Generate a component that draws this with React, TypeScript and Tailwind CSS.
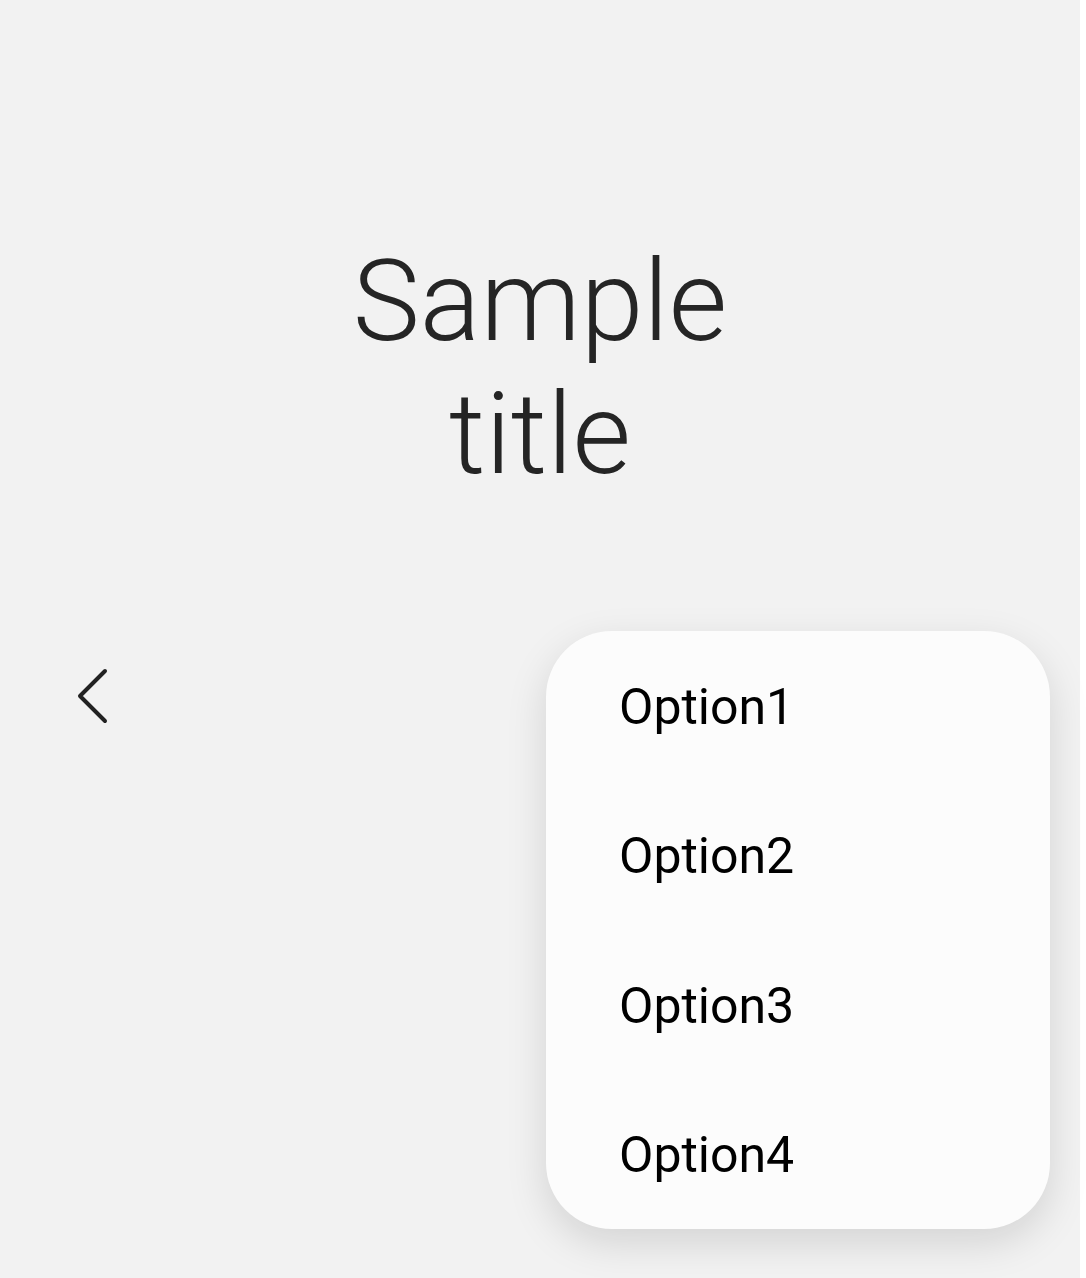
import React from 'react';

const options = ['Option1', 'Option2', 'Option3', 'Option4'];

function BackIcon() {
  return (
    <svg width="46" height="70" viewBox="0 0 46 70" fill="none">
      <path d="M35 10 L10 35 L35 60" stroke="#222222" strokeWidth="4" strokeLinecap="round" strokeLinejoin="round" />
    </svg>
  );
}

function PopupMenu() {
  return (
    <div className="absolute left-[546px] top-[631px] w-[504px] h-[598px] bg-[#fcfcfc] rounded-[66px] shadow-[0_14px_40px_rgba(0,0,0,0.13)] flex flex-col">
      {options.map(o => (
        <div key={o} className="h-[149.5px] flex items-center pl-[73px] pt-[2px] text-[50px] text-black leading-none">
          {o}
        </div>
      ))}
    </div>
  );
}

export default function App() {
  return (
    <div className="flex w-full h-[1278px] overflow-hidden" style={{ fontFamily: 'Roboto, "Noto Sans", sans-serif' }}>
      <div className="relative w-[1080px] h-full bg-[#f2f2f2] flex flex-col">
        <h1 className="pt-[235px] text-center text-[113px] leading-[133px] font-light text-[#252525]">
          Sample
          <br />
          title
        </h1>
        <div className="mt-[160px] pl-[70px]">
          <BackIcon />
        </div>
        <PopupMenu />
      </div>
      <div className="flex-1 bg-white" />
    </div>
  );
}
